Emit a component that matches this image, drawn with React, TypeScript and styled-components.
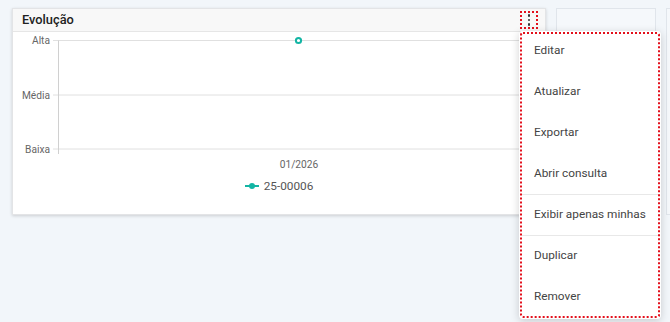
import React from "react";
import styled, { createGlobalStyle } from "styled-components";

const Global = createGlobalStyle`
  html, body { margin: 0; padding: 0; background: #f2f6fa; }
  body { font-family: Roboto, "Liberation Sans", Arial, sans-serif; overflow: hidden; }
  * { box-sizing: border-box; }
`;

const TEAL = "#13b5a4";

const Page = styled.div`
  display: flex;
  align-items: flex-start;
  gap: 10px;
  padding: 8px 0 0 12px;
  width: 670px;
  height: 322px;
  overflow: hidden;
`;

const Card = styled.div`
  width: 534px;
  height: 207px;
  flex: none;
  display: flex;
  flex-direction: column;
  background: #fff;
  border: 1px solid #e3e4e6;
  box-shadow: 0 1px 3px rgba(0, 0, 0, 0.16);
`;

const GhostCard = styled.div<{ $w: number }>`
  width: ${(p) => p.$w}px;
  height: 207px;
  flex: none;
  background: #f5f8fb;
  border: 1px solid #e0e5eb;
`;

const Header = styled.div`
  height: 23px;
  flex: none;
  display: flex;
  align-items: center;
  justify-content: space-between;
  padding: 0 7px 0 9px;
  background: #f8f8f8;
  border-bottom: 1px solid #e6e6e6;
`;

const Title = styled.h3`
  margin: 0;
  font-size: 12.8px;
  font-weight: 500;
  color: #222;
  line-height: 22px;
`;

const MenuAnchor = styled.div`
  position: relative;
  z-index: 5;
`;

const Kebab = styled.button`
  width: 18px;
  height: 18px;
  padding: 0;
  margin: 0;
  border: 2px dotted #e3101c;
  background: transparent;
  display: flex;
  flex-direction: column;
  align-items: center;
  justify-content: center;
  gap: 2px;
`;

const Dot = styled.span`
  width: 2.5px;
  height: 2.5px;
  border-radius: 50%;
  background: #333;
`;

const Menu = styled.ul`
  position: absolute;
  left: -1px;
  top: 20px;
  width: 142px;
  height: 288px;
  margin: 0;
  padding: 0;
  list-style: none;
  background: #fff;
  border-radius: 4px;
  box-shadow: 0 2px 8px rgba(0, 0, 0, 0.18);
  outline: 2px dotted #e3101c;
  outline-offset: -3px;
  overflow: hidden;
`;

const Item = styled.li<{ $sep?: boolean }>`
  height: 41px;
  padding: 12px 0 0 12px;
  font-size: 11.8px;
  line-height: 15px;
  color: #444;
  border-bottom: 1px solid ${(p) => (p.$sep ? "#e8e8e8" : "transparent")};
  margin: 0 3px;
  white-space: nowrap;
`;

const Body = styled.div`
  flex: 1;
  display: flex;
  flex-direction: column;
`;

const Chart = styled.svg`
  display: block;
  width: 532px;
  height: 144px;
  font-family: Roboto, "Liberation Sans", Arial, sans-serif;
`;

const Legend = styled.div`
  display: flex;
  align-items: center;
  justify-content: center;
  gap: 5px;
  height: 20px;
  font-size: 11.8px;
  color: #555;
`;

const levels = [
  { label: "Alta", y: 8.5 },
  { label: "Média", y: 63 },
  { label: "Baixa", y: 117 },
];

const items = [
  { t: "Editar" },
  { t: "Atualizar" },
  { t: "Exportar" },
  { t: "Abrir consulta", sep: true },
  { t: "Exibir apenas minhas", sep: true },
  { t: "Duplicar" },
  { t: "Remover" },
];

export default function App() {
  return (
    <>
      <Global />
      <Page>
        <Card>
          <Header>
            <Title>Evolução</Title>
            <MenuAnchor>
              <Kebab aria-label="Menu">
                <Dot />
                <Dot />
                <Dot />
              </Kebab>
              <Menu>
                {items.map((i) => (
                  <Item key={i.t} $sep={i.sep}>
                    {i.t}
                  </Item>
                ))}
              </Menu>
            </MenuAnchor>
          </Header>
          <Body>
            <Chart viewBox="0 0 532 144">
              {levels.map((l) => (
                <g key={l.label}>
                  <line x1={40} x2={524} y1={l.y} y2={l.y} stroke="#e0e0e0" strokeWidth={1} />
                  <text x={37} y={l.y + 3.5} textAnchor="end" fontSize={10.2} fill="#666">
                    {l.label}
                  </text>
                </g>
              ))}
              <line x1={45.5} x2={45.5} y1={8.5} y2={122} stroke="#d0d0d0" strokeWidth={1} />
              <circle cx={285.5} cy={8.5} r={2.6} fill="#fff" stroke={TEAL} strokeWidth={2} />
              <text x={286} y={136} textAnchor="middle" fontSize={10.2} fill="#666">
                01/2026
              </text>
            </Chart>
            <Legend>
              <svg width="14" height="8" viewBox="0 0 14 8">
                <line x1="0" x2="14" y1="4" y2="4" stroke={TEAL} strokeWidth="2" />
                <circle cx="7" cy="4" r="3" fill={TEAL} />
              </svg>
              <span>25-00006</span>
            </Legend>
          </Body>
        </Card>
        <GhostCard $w={100} />
        <GhostCard $w={100} />
      </Page>
    </>
  );
}
